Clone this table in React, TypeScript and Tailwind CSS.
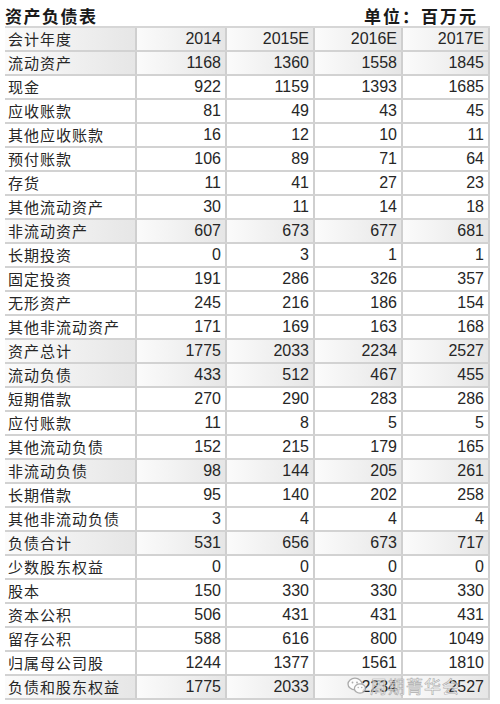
import React from "react"

type Row = { name: string; v: (string | number)[]; gray?: boolean }

const rows: Row[] = [
  { name: "会计年度", v: ["2014", "2015E", "2016E", "2017E"], gray: true },
  { name: "流动资产", v: [1168, 1360, 1558, 1845], gray: true },
  { name: "现金", v: [922, 1159, 1393, 1685] },
  { name: "应收账款", v: [81, 49, 43, 45] },
  { name: "其他应收账款", v: [16, 12, 10, 11] },
  { name: "预付账款", v: [106, 89, 71, 64] },
  { name: "存货", v: [11, 41, 27, 23] },
  { name: "其他流动资产", v: [30, 11, 14, 18] },
  { name: "非流动资产", v: [607, 673, 677, 681], gray: true },
  { name: "长期投资", v: [0, 3, 1, 1] },
  { name: "固定投资", v: [191, 286, 326, 357] },
  { name: "无形资产", v: [245, 216, 186, 154] },
  { name: "其他非流动资产", v: [171, 169, 163, 168] },
  { name: "资产总计", v: [1775, 2033, 2234, 2527], gray: true },
  { name: "流动负债", v: [433, 512, 467, 455], gray: true },
  { name: "短期借款", v: [270, 290, 283, 286] },
  { name: "应付账款", v: [11, 8, 5, 5] },
  { name: "其他流动负债", v: [152, 215, 179, 165] },
  { name: "非流动负债", v: [98, 144, 205, 261], gray: true },
  { name: "长期借款", v: [95, 140, 202, 258] },
  { name: "其他非流动负债", v: [3, 4, 4, 4] },
  { name: "负债合计", v: [531, 656, 673, 717], gray: true },
  { name: "少数股东权益", v: [0, 0, 0, 0] },
  { name: "股本", v: [150, 330, 330, 330] },
  { name: "资本公积", v: [506, 431, 431, 431] },
  { name: "留存公积", v: [588, 616, 800, 1049] },
  { name: "归属母公司股", v: [1244, 1377, 1561, 1810] },
  { name: "负债和股东权益", v: [1775, 2033, 2234, 2527], gray: true },
]

const widths = ["w-[132px]", "w-[90px]", "w-[88px]", "w-[88px]", "w-[87px]"]

function WeChatMark() {
  return (
    <svg width="20" height="18" viewBox="0 0 20 18" fill="none">
      <ellipse cx="8" cy="7" rx="7" ry="5.8" stroke="#9a9a9a" strokeWidth="1.3" fill="#fff" />
      <ellipse cx="13" cy="11.5" rx="5.6" ry="4.6" stroke="#9a9a9a" strokeWidth="1.3" fill="#fff" />
      <circle cx="5.5" cy="5.5" r="0.9" fill="#9a9a9a" />
      <circle cx="10" cy="5.5" r="0.9" fill="#9a9a9a" />
      <circle cx="11.2" cy="10.5" r="0.7" fill="#9a9a9a" />
      <circle cx="14.8" cy="10.5" r="0.7" fill="#9a9a9a" />
    </svg>
  )
}

export default function App() {
  return (
    <div className="relative w-[500px] h-[704px] bg-white overflow-hidden">
      {/* title */}
      <div className="flex items-end justify-between h-[26px] pl-[5px] pr-[22px] pb-[2px] font-['Noto_Sans_CJK_SC',sans-serif] font-bold text-[#1a1a1a]">
        <span className="text-[17px] tracking-[1.5px] leading-none">资产负债表</span>
        <span className="text-[17px] tracking-[2px] leading-none">单位：百万元</span>
      </div>

      <div className="ml-[5px] w-[485px] border-t-2 border-[#d6d6d6]">
        {rows.map((r) => (
          <div key={r.name} className="flex h-[24px] border-b-2 border-[#d2d2d2]">
            <div
              className={`${widths[0]} flex items-center pl-[3px] border-r-2 border-[#cfcfcf] font-['Noto_Sans_CJK_SC',sans-serif] text-[15px] tracking-[1px] text-[#262626] ${
                r.gray ? "bg-linear-to-r from-[#fbfbfb] to-[#e6e6e6]" : "bg-white"
              }`}
            >
              {r.name}
            </div>
            {r.v.map((x, i) => (
              <div
                key={i}
                className={`${widths[i + 1]} flex items-center justify-end pr-[4px] border-r-2 border-[#cfcfcf] font-['Liberation_Sans',Arial,sans-serif] text-[16px] text-[#262626] ${
                  r.gray ? "bg-linear-to-r from-[#fbfbfb] to-[#e6e6e6]" : "bg-white"
                }`}
              >
                {x}
              </div>
            ))}
          </div>
        ))}
      </div>

      {/* watermark */}
      <div className="absolute left-[347px] top-[673px] flex items-center gap-[3px] opacity-80">
        <WeChatMark />
        <span className="font-['Noto_Sans_CJK_SC',sans-serif] text-[17px] text-white tracking-[1px] [-webkit-text-stroke:0.6px_#9a9a9a]">
          周期菁华会
        </span>
      </div>
    </div>
  )
}
